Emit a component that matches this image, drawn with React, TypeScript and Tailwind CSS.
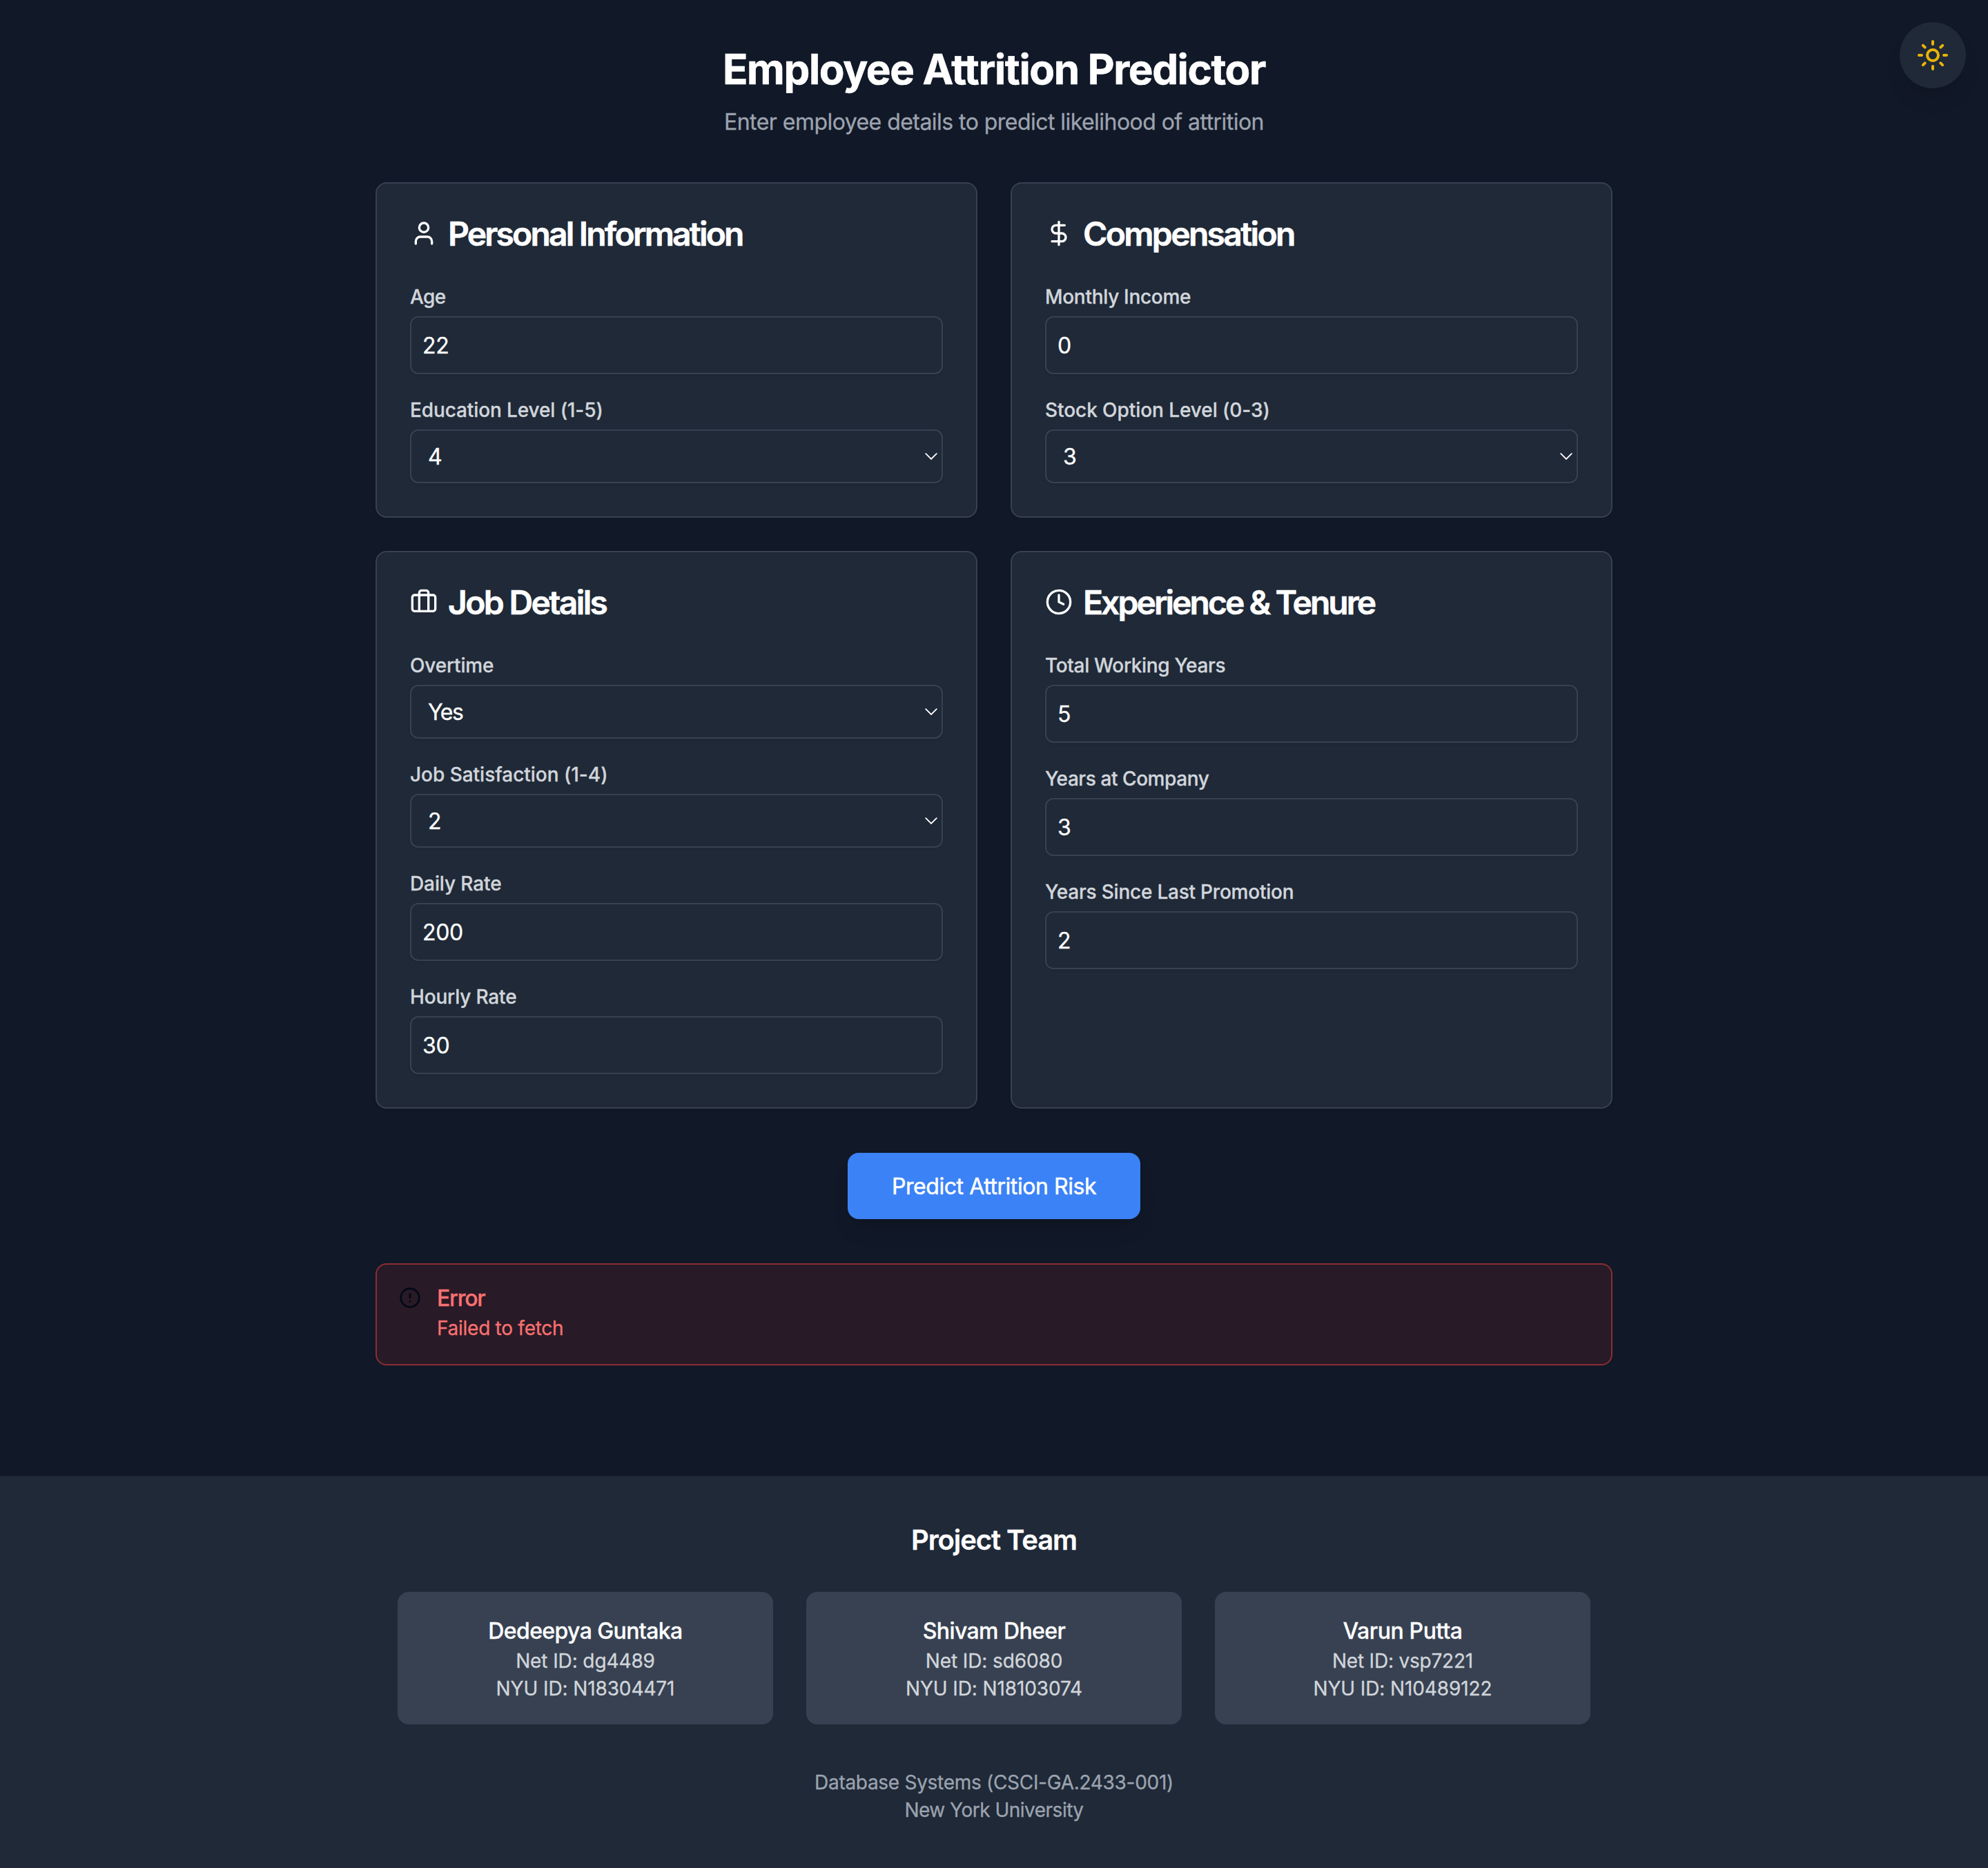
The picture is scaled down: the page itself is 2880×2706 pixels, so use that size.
import type { ReactNode } from "react";
import { Briefcase, CircleAlert, Clock, DollarSign, Sun, User } from "lucide-react";
import type { LucideIcon } from "lucide-react";

function Card({
  icon: Icon,
  title,
  tracking,
  children,
}: {
  icon: LucideIcon;
  title: string;
  tracking: string;
  children: ReactNode;
}) {
  return (
    <section className="rounded-2xl border-2 border-[#374151] bg-[#1f2937] p-12 shadow-[0_2px_4px_rgba(0,0,0,0.05)]">
      <h2 className="mb-12 flex h-12 items-center gap-[15px] text-white">
        <Icon className="size-10 shrink-0" strokeWidth={2} />
        <span
          className={`pt-0.5 whitespace-nowrap text-[48px] leading-none font-semibold [-webkit-text-stroke-width:0.6px] ${tracking}`}
        >
          {title}
        </span>
      </h2>
      <div className="flex flex-col gap-8">{children}</div>
    </section>
  );
}

function Label({ text, tracking }: { text: string; tracking: string }) {
  return (
    <span className={`mb-2 block text-[28px] leading-[40px] font-medium text-[#d1d5db] ${tracking}`}>{text}</span>
  );
}

function NumberField({ label, value, tracking }: { label: string; value: string; tracking: string }) {
  return (
    <label className="block">
      <Label text={label} tracking={tracking} />
      <input
        className="block h-[84px] w-full rounded-xl border-2 border-[#374151] bg-[#1f2937] px-4 text-[32px] leading-[48px] tracking-[-0.012em] text-white shadow-[0_2px_4px_rgba(0,0,0,0.05)]"
        defaultValue={value}
      />
    </label>
  );
}

function SelectField({
  label,
  options,
  value,
  tracking,
  valueTracking = "tracking-normal",
}: {
  label: string;
  options: string[];
  value: string;
  tracking: string;
  valueTracking?: string;
}) {
  return (
    <label className="block">
      <Label text={label} tracking={tracking} />
      <span className="relative block">
        <select
          className={`block h-[78px] w-full appearance-none rounded-xl border-2 border-[#374151] bg-[#1f2937] px-6 pt-0.5 text-[32px] leading-[48px] text-white shadow-[0_2px_4px_rgba(0,0,0,0.05)] ${valueTracking}`}
          defaultValue={value}
        >
          {options.map((o) => (
            <option key={o}>{o}</option>
          ))}
        </select>
        <svg
          className="pointer-events-none absolute top-[34px] right-2 h-[11px] w-[18px]"
          viewBox="0 0 18 11"
          fill="none"
          stroke="white"
          strokeWidth="1.8"
          strokeLinecap="round"
        >
          <path d="M1.2 1.2 9 9l7.8-7.8" />
        </svg>
      </span>
    </label>
  );
}

const team = [
  {
    name: "Dedeepya Guntaka",
    net: "dg4489",
    nyu: "N18304471",
    nameTracking: "tracking-[-0.019em]",
    netTracking: "tracking-[-0.004em]",
  },
  {
    name: "Shivam Dheer",
    net: "sd6080",
    nyu: "N18103074",
    nameTracking: "tracking-[-0.0185em]",
    netTracking: "tracking-[-0.004em]",
  },
  {
    name: "Varun Putta",
    net: "vsp7221",
    nyu: "N10489122",
    nameTracking: "tracking-[-0.0125em]",
    netTracking: "tracking-[-0.0075em]",
  },
];

export default function App() {
  return (
    <div className="flex min-h-[2706px] flex-col bg-[#111827] font-['Inter',sans-serif] antialiased [-webkit-text-stroke-width:0.3px]">
      <button
        aria-label="Toggle theme"
        className="fixed top-8 right-8 flex size-24 items-center justify-center rounded-full bg-[#1f2937] text-[#eab308] shadow-[0_20px_30px_-6px_rgba(0,0,0,0.1),0_8px_12px_-8px_rgba(0,0,0,0.1)]"
      >
        <Sun className="size-12" strokeWidth={2} />
      </button>

      <main className="mx-auto flex w-[1792px] flex-1 flex-col gap-16 pt-16">
        <header className="text-center">
          <h1 className="mb-[17px] text-[60px] leading-[72px] font-bold tracking-[-0.0226em] text-white [-webkit-text-stroke-width:0.6px]">
            Employee Attrition Predictor
          </h1>
          <p className="-mb-px text-[32px] leading-[48px] tracking-[-0.017em] text-[#9ca3af]">
            Enter employee details to predict likelihood of attrition
          </p>
        </header>

        <form className="flex flex-col gap-16">
          <div className="grid grid-cols-2 gap-12">
            <Card icon={User} title="Personal Information" tracking="tracking-[-0.0588em]">
              <NumberField label="Age" value="22" tracking="tracking-[-0.02em]" />
              <SelectField
                label="Education Level (1-5)"
                options={["1", "2", "3", "4", "5"]}
                value="4"
                tracking="tracking-[-0.004em]"
              />
            </Card>
            <Card icon={DollarSign} title="Compensation" tracking="tracking-[-0.0553em]">
              <NumberField label="Monthly Income" value="0" tracking="tracking-[-0.0108em]" />
              <SelectField
                label="Stock Option Level (0-3)"
                options={["0", "1", "2", "3"]}
                value="3"
                tracking="tracking-[-0.0025em]"
              />
            </Card>
            <Card icon={Briefcase} title="Job Details" tracking="tracking-[-0.055em]">
              <SelectField
                label="Overtime"
                options={["Yes", "No"]}
                value="Yes"
                tracking="tracking-[-0.006em]"
                valueTracking="tracking-[-0.045em]"
              />
              <SelectField
                label="Job Satisfaction (1-4)"
                options={["1", "2", "3", "4"]}
                value="2"
                tracking="tracking-[-0.001em]"
              />
              <NumberField label="Daily Rate" value="200" tracking="tracking-[-0.004em]" />
              <NumberField label="Hourly Rate" value="30" tracking="tracking-[-0.006em]" />
            </Card>
            <Card icon={Clock} title="Experience & Tenure" tracking="tracking-[-0.0615em]">
              <NumberField label="Total Working Years" value="5" tracking="tracking-[-0.0125em]" />
              <NumberField label="Years at Company" value="3" tracking="tracking-[-0.0155em]" />
              <NumberField label="Years Since Last Promotion" value="2" tracking="tracking-[-0.008em]" />
            </Card>
          </div>

          <button
            type="button"
            className="h-24 w-[424px] self-center rounded-2xl bg-[#3b82f6] pt-0.5 text-[32px] leading-[48px] tracking-[-0.0136em] text-white shadow-[0_20px_30px_-6px_rgba(0,0,0,0.1),0_8px_12px_-8px_rgba(0,0,0,0.1)] [-webkit-text-stroke-width:0.5px]"
          >
            Predict Attrition Risk
          </button>
        </form>

        <div role="alert" className="flex gap-6 rounded-2xl border-2 border-[#8a2e34] bg-[#281a26] p-8">
          <CircleAlert className="size-8 shrink-0 text-[#020817]" strokeWidth={2} />
          <div className="-ml-px text-[#f87171]">
            <h5 className="mb-[7px] pt-px text-[32px] leading-none font-medium tracking-[-0.0381em]">Error</h5>
            <p className="text-[28px] leading-[40px] tracking-[-0.0095em]">Failed to fetch</p>
          </div>
        </div>
      </main>

      <footer className="bg-[#1f2937] pt-[65px] pb-16 text-center">
        <h3 className="mb-[47px] text-[40px] leading-[56px] font-semibold tracking-[-0.027em] text-white">
          Project Team
        </h3>
        <div className="mx-auto grid w-[1728px] grid-cols-3 gap-12">
          {team.map((m) => (
            <div key={m.name} className="rounded-2xl bg-[#374151] p-8">
              <p className={`-mb-px pt-px text-[32px] leading-[48px] font-medium text-white ${m.nameTracking}`}>
                {m.name}
              </p>
              <p className={`text-[28px] leading-[40px] text-[#d1d5db] ${m.netTracking}`}>Net ID: {m.net}</p>
              <p className="text-[28px] leading-[40px] tracking-[-0.004em] text-[#d1d5db]">NYU ID: {m.nyu}</p>
            </div>
          ))}
        </div>
        <div className="mt-16 text-[28px] leading-[40px] text-[#9ca3af]">
          <p className="tracking-[-0.0105em]">Database Systems (CSCI-GA.2433-001)</p>
          <p className="tracking-[-0.018em]">New York University</p>
        </div>
      </footer>
    </div>
  );
}
